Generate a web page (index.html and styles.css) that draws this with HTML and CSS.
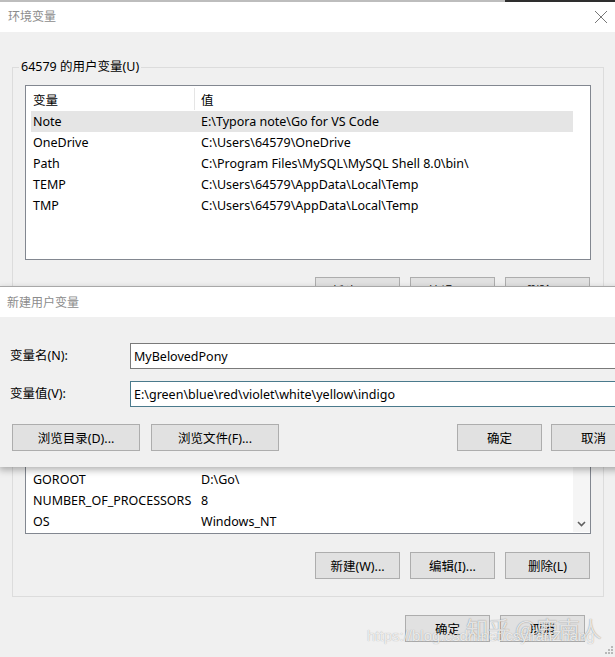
FILE: index.html
```html
<!DOCTYPE html>
<html lang="zh-CN">
<head>
<meta charset="utf-8">
<title>环境变量</title>
<link rel="stylesheet" href="styles.css">
</head>
<body>
<div class="win">
  <div class="topedge"><div class="edge-a"></div><div class="edge-b"></div></div>
  <div class="titlebar">
    <span class="title">环境变量</span>
    <svg class="close" width="14" height="14" viewBox="0 0 14 14"><path d="M1 1 L13 13 M13 1 L1 13" stroke="#777" stroke-width="1" fill="none"/></svg>
  </div>
  <div class="winbody">
    <fieldset class="group user">
      <legend>64579 的用户变量(U)</legend>
      <div class="list user-list">
        <div class="lv">
          <div class="lv-head"><div class="c1">变量</div><div class="c2">值</div></div>
          <div class="lv-row sel"><div class="c1">Note</div><div class="c2">E:\Typora note\Go for VS Code</div></div>
          <div class="lv-row"><div class="c1">OneDrive</div><div class="c2">C:\Users\64579\OneDrive</div></div>
          <div class="lv-row"><div class="c1">Path</div><div class="c2">C:\Program Files\MySQL\MySQL Shell 8.0\bin\</div></div>
          <div class="lv-row"><div class="c1">TEMP</div><div class="c2">C:\Users\64579\AppData\Local\Temp</div></div>
          <div class="lv-row"><div class="c1">TMP</div><div class="c2">C:\Users\64579\AppData\Local\Temp</div></div>
        </div>
      </div>
      <div class="btnrow group-btns">
        <button class="btn">新建(N)...</button>
        <button class="btn">编辑(E)...</button>
        <button class="btn">删除(D)</button>
      </div>
    </fieldset>
    <fieldset class="group sys">
      <legend>系统变量(S)</legend>
      <div class="list sys-list">
        <div class="lv">
          <div class="lv-head"><div class="c1">变量</div><div class="c2">值</div></div>
          <div class="lv-row"><div class="c1">ComSpec</div><div class="c2">C:\Windows\system32\cmd.exe</div></div>
          <div class="lv-row"><div class="c1">DriverData</div><div class="c2">C:\Windows\System32\Drivers\DriverData</div></div>
          <div class="lv-row"><div class="c1">GO111MODULE</div><div class="c2">on</div></div>
          <div class="lv-row"><div class="c1">GOPATH</div><div class="c2">E:\Go</div></div>
          <div class="lv-row"><div class="c1">GOPROXY</div><div class="c2">https://goproxy.io</div></div>
          <div class="lv-row"><div class="c1">GOROOT</div><div class="c2">D:\Go\</div></div>
          <div class="lv-row"><div class="c1">NUMBER_OF_PROCESSORS</div><div class="c2">8</div></div>
          <div class="lv-row"><div class="c1">OS</div><div class="c2">Windows_NT</div></div>
        </div>
        <div class="vscroll">
          <div class="track"></div>
          <div class="arrow"><svg width="9" height="6" viewBox="0 0 9 6"><path d="M1 1 L4.5 4.5 L8 1" stroke="#606060" stroke-width="1.6" fill="none"/></svg></div>
        </div>
      </div>
      <div class="btnrow group-btns sys-btns">
        <button class="btn">新建(W)...</button>
        <button class="btn">编辑(I)...</button>
        <button class="btn">删除(L)</button>
      </div>
    </fieldset>
    <div class="btnrow main-btns">
      <button class="btn">确定</button>
      <button class="btn">取消</button>
    </div>
  </div>

  <div class="dialog">
    <div class="dlg-title">新建用户变量</div>
    <div class="dlg-body">
      <div class="form">
        <label class="lbl">变量名(N):</label>
        <div class="input">MyBelovedPony</div>
        <label class="lbl">变量值(V):</label>
        <div class="input focus">E:\green\blue\red\violet\white\yellow\indigo</div>
      </div>
      <div class="dlg-btns">
        <button class="btn wide">浏览目录(D)...</button>
        <button class="btn wide">浏览文件(F)...</button>
        <div class="spacer"></div>
        <button class="btn">确定</button>
        <button class="btn">取消</button>
      </div>
    </div>
  </div>

  <div class="wm wm-zh">知乎 @鹿南人</div>
  <div class="wm wm-url">https://blog.csdn.net/csyifanZhang</div>
  <svg class="grip" width="8" height="8" viewBox="0 0 8 8"><g fill="#b8b8b8"><rect x="6" y="0" width="2" height="2"/><rect x="3" y="3" width="2" height="2"/><rect x="6" y="3" width="2" height="2"/><rect x="0" y="6" width="2" height="2"/><rect x="3" y="6" width="2" height="2"/><rect x="6" y="6" width="2" height="2"/></g></svg>
</div>
</body>
</html>
```
FILE: styles.css
```css
* { box-sizing: border-box; }
html, body { margin: 0; padding: 0; }
body {
  font-family: "Noto Sans", "Noto Sans CJK SC", sans-serif;
  font-size: 12.5px;
  color: #000;
  background: #f0f0f0;
}
.win {
  position: relative;
  width: 615px;
  height: 657px;
  overflow: hidden;
  background: #f0f0f0;
}
.topedge { display: flex; height: 2px; }
.edge-a { width: 505px; background: #bdbdbd; }
.edge-b { flex: 1; background: #2e2e2e; }
.titlebar {
  height: 30px;
  background: #fff;
  display: flex;
  align-items: center;
  justify-content: space-between;
  padding: 0 7px 0 8px;
}
.title { color: #8c8c8c; line-height: 16px; font-size: 12px; }
.close { display: block; }
.winbody { padding: 27px 0 0 12px; }
.group {
  margin: 0;
  width: 592px;
  min-width: 0;
  border: 1px solid #dcdcdc;
  padding: 10px 12px 8px 12px;
}
.group legend {
  padding: 0 2px;
  margin-left: -6px;
  line-height: 16px;
}
.sys { padding-bottom: 17px; }
.list {
  border: 1px solid #828790;
  background: #fff;
  padding: 0 0 1px 5px;
  display: flex;
  overflow: hidden;
}
.user-list { height: 175px; padding-top: 1px; }
.sys-list { height: 195px; }
.lv { width: 542px; flex: none; }
.lv-head, .lv-row { display: flex; white-space: nowrap; }
.lv-head { height: 24px; align-items: center; }
.lv-row { height: 21px; align-items: center; }
.c1 { width: 164px; padding-left: 2px; flex: none; }
.c2 { flex: 1; padding-left: 6px; overflow: hidden; }
.lv-head .c1 { border-right: 1px solid #e5e5e5; height: 22px; display: flex; align-items: center; }
.lv-row.sel { background: #e5e5e5; }
.vscroll {
  width: 17px;
  flex: none;
  display: flex;
  flex-direction: column;
  background: #f5f5f5;
}
.track { flex: 1; }
.arrow { height: 17px; display: flex; align-items: center; justify-content: center; }
.arrow svg { display: block; }
.btnrow { display: flex; justify-content: flex-end; gap: 10px; }
.group-btns { margin-top: 17px; padding-right: 1px; }
.sys-btns { margin-top: 18px; }
.btn {
  width: 85px;
  height: 27px;
  border: 1px solid #adadad;
  background: #e1e1e1;
  font: inherit;
  color: #000;
  padding: 0;
  white-space: nowrap;
}
.main-btns { margin-top: 18px; padding-right: 30px; }

.dialog {
  position: absolute;
  top: 286px;
  left: -1px;
  width: 700px;
  border-top: 1px solid #a8a8a8;
  background: #f0f0f0;
  box-shadow: 0 3px 7px rgba(0, 0, 0, 0.3);
}
.dlg-title {
  height: 30px;
  background: #fff;
  color: #8c8c8c;
  font-size: 12px;
  display: flex;
  align-items: center;
  padding-left: 8px;
}
.dlg-body { padding: 26px 0 16px 11px; }
.form {
  display: grid;
  grid-template-columns: 120px 1fr;
  row-gap: 12px;
  align-items: center;
}
.lbl { line-height: 16px; }
.input {
  height: 26px;
  border: 1px solid #7a7a7a;
  background: #fff;
  padding-left: 3px;
  display: flex;
  align-items: center;
  white-space: nowrap;
}
.input.focus { border-color: #4a7a8c; }
.dlg-btns { display: flex; margin-top: 17px; padding-left: 2px; }
.btn.wide { width: 128px; margin-right: 11px; }
.spacer { width: 167px; }
.dlg-btns .btn + .btn:not(.wide) { margin-left: 9px; }

.wm {
  position: absolute;
  white-space: nowrap;
  pointer-events: none;
}
.wm-zh {
  left: 466px;
  top: 615px;
  font-family: "Noto Sans CJK SC", sans-serif;
  font-size: 22px;
  line-height: 24px;
  color: rgba(255, 255, 255, 0.8);
  text-shadow: 0 0 1px rgba(0, 0, 0, 0.5);
}
.wm-url {
  left: 367px;
  top: 627px;
  font-family: "Liberation Sans", sans-serif;
  font-size: 15px;
  line-height: 18px;
  color: rgba(255, 255, 255, 0.8);
  text-shadow: 0 0 1px rgba(0, 0, 0, 0.35);
}
.grip { position: absolute; right: 2px; bottom: 3px; }
```
